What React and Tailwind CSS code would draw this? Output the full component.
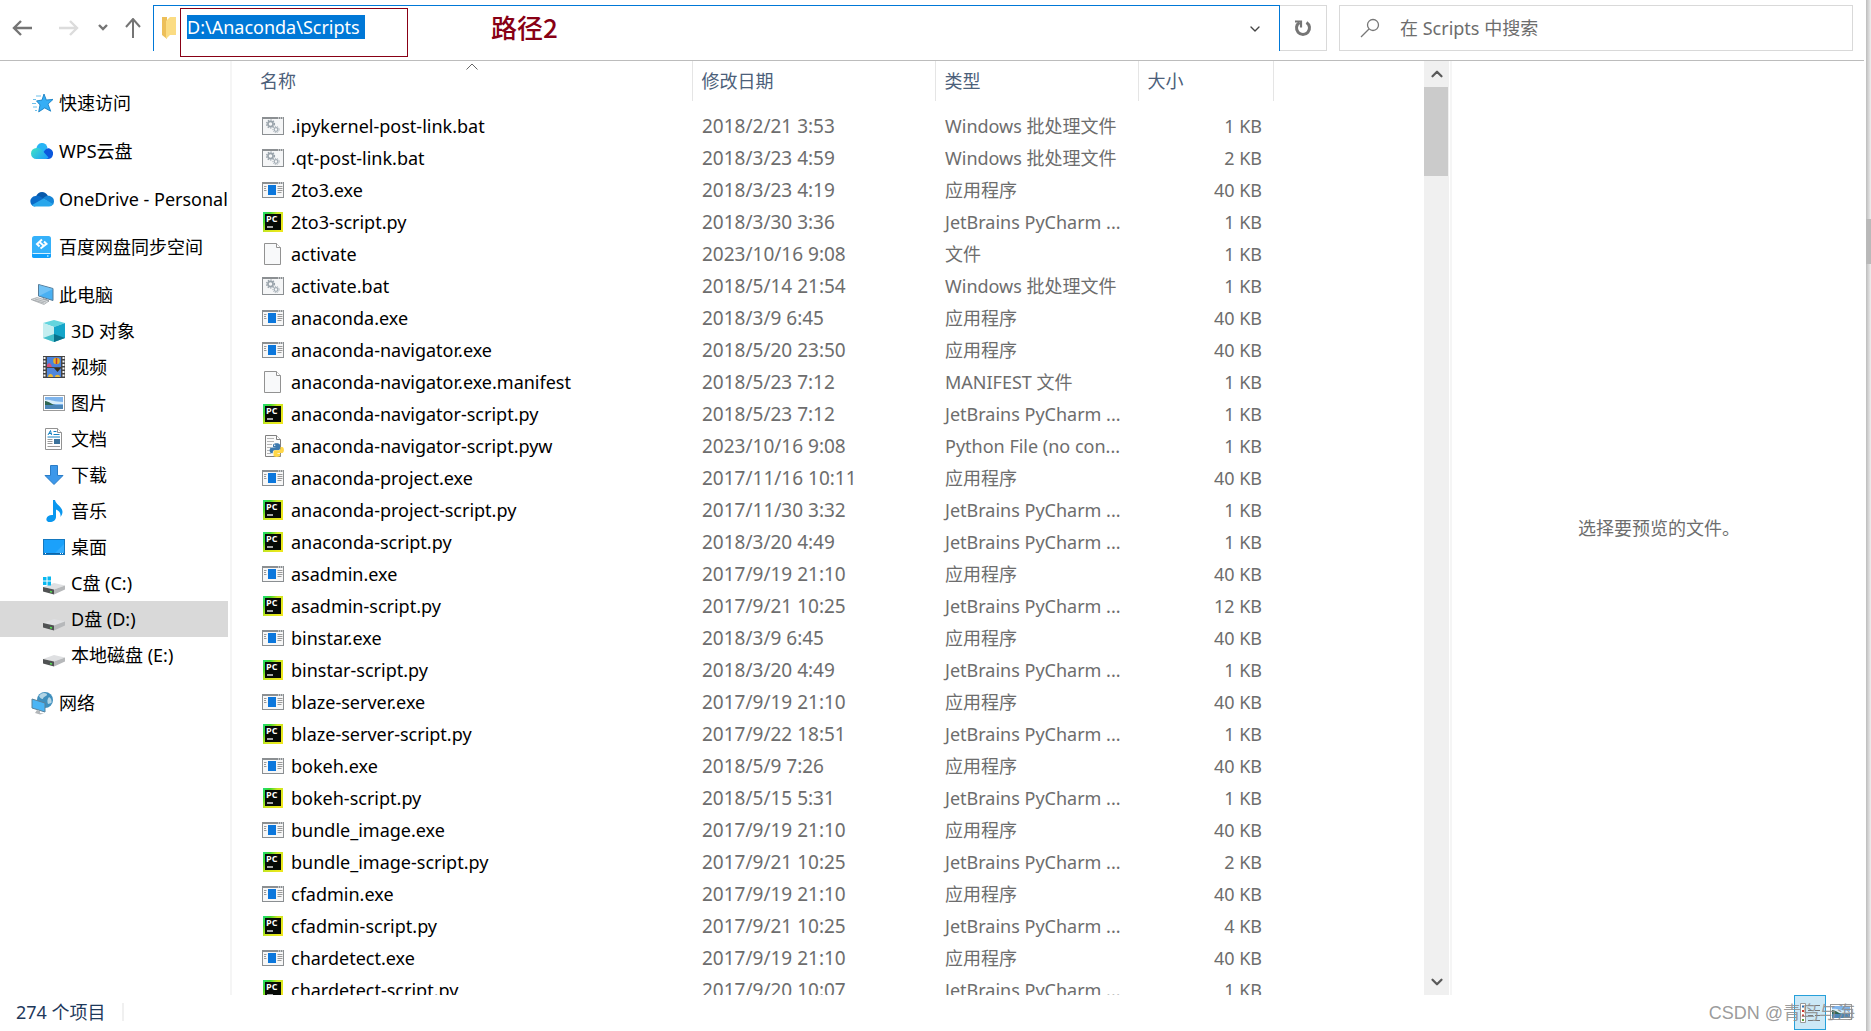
import { useId, useState } from 'react';
import { ChevronDown, ChevronUp } from 'lucide-react';

// ── Data ─────────────────────────────────────────────────────
const BAT = 'Windows 批处理文件';
const EXE = '应用程序';
const PY = 'JetBrains PyCharm ...';

const FILES = [
  ['bat', '.ipykernel-post-link.bat', '2018/2/21 3:53', BAT, '1 KB'],
  ['bat', '.qt-post-link.bat', '2018/3/23 4:59', BAT, '2 KB'],
  ['exe', '2to3.exe', '2018/3/23 4:19', EXE, '40 KB'],
  ['py', '2to3-script.py', '2018/3/30 3:36', PY, '1 KB'],
  ['file', 'activate', '2023/10/16 9:08', '文件', '1 KB'],
  ['bat', 'activate.bat', '2018/5/14 21:54', BAT, '1 KB'],
  ['exe', 'anaconda.exe', '2018/3/9 6:45', EXE, '40 KB'],
  ['exe', 'anaconda-navigator.exe', '2018/5/20 23:50', EXE, '40 KB'],
  ['file', 'anaconda-navigator.exe.manifest', '2018/5/23 7:12', 'MANIFEST 文件', '1 KB'],
  ['py', 'anaconda-navigator-script.py', '2018/5/23 7:12', PY, '1 KB'],
  ['pyw', 'anaconda-navigator-script.pyw', '2023/10/16 9:08', 'Python File (no con...', '1 KB'],
  ['exe', 'anaconda-project.exe', '2017/11/16 10:11', EXE, '40 KB'],
  ['py', 'anaconda-project-script.py', '2017/11/30 3:32', PY, '1 KB'],
  ['py', 'anaconda-script.py', '2018/3/20 4:49', PY, '1 KB'],
  ['exe', 'asadmin.exe', '2017/9/19 21:10', EXE, '40 KB'],
  ['py', 'asadmin-script.py', '2017/9/21 10:25', PY, '12 KB'],
  ['exe', 'binstar.exe', '2018/3/9 6:45', EXE, '40 KB'],
  ['py', 'binstar-script.py', '2018/3/20 4:49', PY, '1 KB'],
  ['exe', 'blaze-server.exe', '2017/9/19 21:10', EXE, '40 KB'],
  ['py', 'blaze-server-script.py', '2017/9/22 18:51', PY, '1 KB'],
  ['exe', 'bokeh.exe', '2018/5/9 7:26', EXE, '40 KB'],
  ['py', 'bokeh-script.py', '2018/5/15 5:31', PY, '1 KB'],
  ['exe', 'bundle_image.exe', '2017/9/19 21:10', EXE, '40 KB'],
  ['py', 'bundle_image-script.py', '2017/9/21 10:25', PY, '2 KB'],
  ['exe', 'cfadmin.exe', '2017/9/19 21:10', EXE, '40 KB'],
  ['py', 'cfadmin-script.py', '2017/9/21 10:25', PY, '4 KB'],
  ['exe', 'chardetect.exe', '2017/9/19 21:10', EXE, '40 KB'],
  ['py', 'chardetect-script.py', '2017/9/20 10:07', PY, '1 KB'],
];

const ROOTS = [
  { icon: 'star', label: '快速访问' },
  { icon: 'wps', label: 'WPS云盘' },
  { icon: 'onedrive', label: 'OneDrive - Personal' },
  { icon: 'baidu', label: '百度网盘同步空间' },
];

const THIS_PC = [
  { icon: 'cube', label: '3D 对象' },
  { icon: 'film', label: '视频' },
  { icon: 'picture', label: '图片' },
  { icon: 'doc', label: '文档' },
  { icon: 'download', label: '下载' },
  { icon: 'music', label: '音乐' },
  { icon: 'desktop', label: '桌面' },
  { icon: 'winDrive', label: 'C盘 (C:)' },
  { icon: 'drive', label: 'D盘 (D:)' },
  { icon: 'drive', label: '本地磁盘 (E:)' },
];

// ── File icons (22x22) ───────────────────────────────────────
function BatIcon() {
  return (
    <>
      <rect x="0.5" y="2.5" width="21" height="17" fill="#f5f6f7" stroke="#8b8f92" />
      <path d="M0 3h22" stroke="#8b8f92" strokeWidth="2" />
      <path d="M16 3h1M18 3h1M20 3h1" stroke="#fff" />
      <circle cx="8.5" cy="9" r="2.6" fill="none" stroke="#98a2aa" strokeWidth="1.6" />
      <circle cx="8.5" cy="9" r="4" fill="none" stroke="#98a2aa" strokeWidth="1.2" strokeDasharray="1.4 1.2" />
      <circle cx="14" cy="14.5" r="1.8" fill="none" stroke="#a3adb5" strokeWidth="1.2" />
      <circle cx="14" cy="14.5" r="3.1" fill="none" stroke="#a3adb5" strokeWidth="1" strokeDasharray="1.2 1" />
    </>
  );
}

function ExeIcon() {
  return (
    <>
      <rect x="0.5" y="3.5" width="21" height="15" fill="#f7f7f7" stroke="#8b8f92" />
      <path d="M0 4h22" stroke="#8b8f92" strokeWidth="2" />
      <path d="M16 4h1M18 4h1M20 4h1" stroke="#fff" />
      <rect x="6" y="6" width="8" height="10" fill="#0c77dc" />
      <path d="M2 7.5h2.500M2 9.500h2M2 11.500h2.500M15.500 7.500h5M15.500 9.500h5M15.500 11.500h5M15.500 13.500h4" stroke="#999" />
    </>
  );
}

function PyCharmIcon() {
  const id = useId();
  return (
    <>
      <defs>
        <linearGradient id={id} x1="0" y1="0" x2="1" y2="0.7">
          <stop offset="0" stopColor="#21e07c" />
          <stop offset="0.25" stopColor="#3fd62e" />
          <stop offset="0.5" stopColor="#c8e622" />
          <stop offset="1" stopColor="#eee81d" />
        </linearGradient>
      </defs>
      <rect x="1" y="1" width="20" height="20" fill={`url(#${id})`} />
      <rect x="3" y="3" width="16" height="16" fill="#060a06" />
      <text x="4" y="10.500" fontSize="9" fontWeight="700" fill="#fff" fontFamily="Open Sans, sans-serif">PC</text>
      <path d="M5 16h6" stroke="#fff" strokeWidth="1.300" />
    </>
  );
}

function BlankIcon() {
  return (
    <>
      <path d="M2.500 0.500h12l4 4v17h-16z" fill="#f8f9fa" stroke="#929292" />
      <path d="M14.500 0.500v4h4" fill="#fff" stroke="#929292" />
    </>
  );
}

function PywIcon() {
  return (
    <>
      <path d="M3.500 0.500h11l4 4v17h-15z" fill="#fafafa" stroke="#808080" />
      <path d="M14.500 0.500v4h4" fill="#fff" stroke="#808080" />
      <path d="M5 3.500h7M5 6.500h7M5 9.500h5M5 12.500h4M5 15.500h3M5 18.500h4" stroke="#b5b5b5" />
      <path d="M11 12v-2c0-2 7-2.500 7 0v3.500c0 1-.8 1.700-1.800 1.700h-3.400c-1.200 0-2 .8-2 2v1H9.500c-2.300 0-2.500-5.700 0-5.700h5z" fill="#3b78ad" />
      <path d="M18.500 12h1.700c2.300 0 2.300 6 0 6h-4.700v.7h2.800v1.600c0 2-6.800 2.200-6.800 0v-3.500c0-1 .7-1.600 1.600-1.600h3.600c1.200 0 1.800-.8 1.800-1.800z" fill="#ffd748" />
      <circle cx="12.700" cy="10.200" r="0.700" fill="#fff" />
    </>
  );
}

// ── Navigation icons (24x24) ─────────────────────────────────
function StarIcon() {
  return (
    <>
      <path d="M14 3l2.300 6 6.700-.6-5 4.700 2.700 7.100-6-3.300-6 4 1.300-7-3.500-4 5.500-.8z" fill="#35aef5" stroke="#1b81c4" strokeWidth="0.900" />
      <path d="M6 5h5M3 8.500h3M2 12.500h4M3 16h4M5 19.500h2" stroke="#6fc0ea" />
    </>
  );
}

function WpsIcon() {
  const id = useId();
  return (
    <>
      <defs>
        <linearGradient id={id} x1="0" y1="0" x2="1" y2="0.6">
          <stop offset="0" stopColor="#3fe3c4" />
          <stop offset="1" stopColor="#20a4f6" />
        </linearGradient>
      </defs>
      <path d="M6.500 10a5.500 5.500 0 0 1 11-1l-6 7z" fill="#28b4f5" />
      <path d="M8.500 20l5-7c2-3.500 4.500-4.500 6-3.500 2.500 1 4 3 3.500 6-.5 3-2.500 4.500-5 4.500z" fill="#0b58dd" />
      <path d="M6.500 9c3-.5 5 1.200 8 5l4 4.500c-1 1-2 1.500-4 1.500h-8A5.500 5.500 0 0 1 6.500 9z" fill={`url(#${id})`} />
    </>
  );
}

function OneDriveIcon() {
  return (
    <>
      <path d="M6 10c1.500-6 9-7 12-1l-6 5z" fill="#0759ab" />
      <path d="M5.500 9c3-.8 5 .7 8 2.500L5 19.500C-1.500 19-1 9.500 5.500 9z" fill="#0a6bc8" />
      <path d="M13 11.500c2-2.300 4.500-3.300 7-2.500 4 1.500 5 5 3 9z" fill="#1585d7" />
      <path d="M2 18l11.500-6.500L23 17c-.5 1.700-2 2.500-4 2.500H5.500c-1.500 0-3-.5-3.500-1.500z" fill="#29a7ec" />
    </>
  );
}

function BaiduIcon() {
  return (
    <>
      <rect x="2" y="1" width="19" height="22" rx="2.500" fill="#35b1fa" />
      <path d="M2 18h19v3c0 1-1 2-2 2H4c-1 0-2-1-2-2z" fill="#12a0fb" />
      <path d="M2.500 18.500h18" stroke="#d8f1ff" />
      <path d="M12 4.500L7 9l2.500 2.500M10.500 13.500L16.500 9 14 6.500M10 7.500l4 3.500" fill="none" stroke="#fff" strokeWidth="2" />
      <path d="M17 21h1.500" stroke="#b7e8ff" strokeWidth="1.500" />
    </>
  );
}

function ComputerIcon() {
  return (
    <>
      <path d="M8.500 1.500l14.500 4v12l-14.500-4.500z" fill="#49b0f2" stroke="#567b97" />
      <path d="M9 2l14 4-14 7z" fill="#83caf7" opacity="0.700" />
      <path d="M13 15l6 2v2l-7-1z" fill="#9aa0a4" />
      <path d="M1 16.500l6-2 12 3.500-5 3.500z" fill="#d9dcde" stroke="#9ca1a4" strokeWidth="0.700" />
      <path d="M3 17l11 3M5 16l11 3" stroke="#9ca1a4" strokeWidth="0.700" />
    </>
  );
}

function CubeIcon() {
  return (
    <>
      <path d="M1 4l11-3 11 3-11 4z" fill="#63d5de" />
      <path d="M1 4l11 4v15L1 19z" fill="#c4eef0" />
      <path d="M23 4L12 8v15l11-4z" fill="#14a5c9" />
      <path d="M1 19l11-4v8z" fill="#44bfcb" />
      <path d="M23 19l-11-4v8z" fill="#08718b" />
    </>
  );
}

function FilmIcon() {
  return (
    <>
      <rect x="1" y="1" width="22" height="22" fill="#444" />
      <path d="M2.500 2v21M21.500 2v21" stroke="#f4f4f4" strokeWidth="2" strokeDasharray="2 1.500" />
      <rect x="5" y="2" width="14" height="10" fill="#4b83db" />
      <rect x="5" y="13" width="14" height="9" fill="#4f86dc" />
      <path d="M5 10c2-3 4-2 5 2H5z" fill="#d8507a" />
      <circle cx="14.500" cy="6" r="3.300" fill="#e6b324" />
      <path d="M14.500 3v6" stroke="#c5362c" strokeWidth="1.500" />
      <path d="M12 13h7l-3.500 4z" fill="#38301c" />
      <path d="M13 22c0-3 5-3 5 0z" fill="#ebb935" />
      <path d="M6 22c0-4 5-4 5 0z" fill="#ebb935" />
    </>
  );
}

function PictureIcon() {
  return (
    <>
      <rect x="1.500" y="4.500" width="21" height="15" fill="#fff" stroke="#9b9b9b" />
      <rect x="3" y="6" width="18" height="12" fill="#7eb4ec" />
      <path d="M3 9c5-1 8 2 18 2v2H3z" fill="#d8edfa" />
      <path d="M3 10c4 0 7 4 11 4H3z" fill="#2f6652" />
      <path d="M3 14h18v4H3z" fill="#4c86b7" />
    </>
  );
}

function DocIcon() {
  return (
    <>
      <path d="M3.500 1.500h12l4 4v17h-16z" fill="#fff" stroke="#929292" />
      <path d="M15.500 1.500v4h4" fill="#fff" stroke="#929292" />
      <path d="M6 8l2.500-4.500L9.500 8M7 6.500h2.500M11.500 4.500h3M11.500 7.500h6M5.500 10h12.500" stroke="#1683c2" fill="none" strokeWidth="1" />
      <path d="M5.500 12.500h5M5.500 14.500h5M5.500 16.500h5M5.500 19.500h12.500" stroke="#9a9a9a" />
      <rect x="12" y="12" width="6" height="5" fill="#3c739c" />
    </>
  );
}

function DownloadIcon() {
  return <path d="M8.500 2.500h7v10h5.500L12 21.500l-9-9h5.500z" fill="#3d98ea" stroke="#2a7dc8" />;
}

function MusicIcon() {
  return (
    <path
      d="M11 1h2c1 5 7 6 7.500 12-.2 2-.8 3.500-2 5 .5-4-1.500-6.500-4.500-7.500V18c0 3-3 5-6 5s-4-1.500-3.500-3.500c.5-2.500 3.500-4 6.500-3.500z"
      fill="#0a97ef"
    />
  );
}

function DesktopIcon() {
  return (
    <>
      <rect x="1.500" y="4.500" width="21" height="15" fill="#1ba1fb" stroke="#1478bf" />
      <path d="M12 19L22 9v9H12z" fill="#44b4ff" opacity="0.600" />
      <path d="M2 18.500h20" stroke="#0d64a8" />
      <path d="M3 18.500h1M18 18.500h1M20 18.500h1" stroke="#fff" />
    </>
  );
}

function DriveIcon() {
  return (
    <>
      <path d="M1 16l11-4 11 2.500-11 4z" fill="#dfe0e2" />
      <path d="M1 16l11 2.500v5L1 20.500z" fill="#505253" />
      <path d="M12 18.500l11-4v4l-11 5z" fill="#b6b8ba" />
      <path d="M8 20.500l2 .5" stroke="#53e052" strokeWidth="1.500" />
    </>
  );
}

function WinDriveIcon() {
  return (
    <>
      <DriveIcon />
      <path d="M1 6h3.500v3.500H1zM5.500 5.500H9v4H5.500zM1 10.500h3.500V14H1zM5.500 10.500H9v4H5.500z" fill="#08b8f0" />
    </>
  );
}

function NetworkIcon() {
  return (
    <>
      <circle cx="15" cy="9" r="8" fill="#3f8fbd" />
      <path d="M9 5c3-4 6-3 8-2 0 3-4 2-4 5-2 0-3-1-4-3zM19 6c2 1 3 3 2.500 6L18 13c-1-2-1-5 1-7z" fill="#b3d5e5" />
      <path d="M2 8l13 4v9L2 17z" fill="#4bb5f5" stroke="#5a8199" />
      <path d="M7 19l3 1v2l4 .5-4 1-5-1.500z" fill="#b3b7ba" />
    </>
  );
}

const ICONS = {
  bat: BatIcon, exe: ExeIcon, py: PyCharmIcon, file: BlankIcon, pyw: PywIcon,
  star: StarIcon, wps: WpsIcon, onedrive: OneDriveIcon, baidu: BaiduIcon, pc: ComputerIcon,
  cube: CubeIcon, film: FilmIcon, picture: PictureIcon, doc: DocIcon, download: DownloadIcon,
  music: MusicIcon, desktop: DesktopIcon, drive: DriveIcon, winDrive: WinDriveIcon, network: NetworkIcon,
};

function Icon({ name, size = 24 }) {
  const Shape = ICONS[name];
  return (
    <svg width={size} height={size} viewBox={`0 0 ${size} ${size}`} className="shrink-0" aria-hidden="true">
      <Shape />
    </svg>
  );
}

// ── Top bar ──────────────────────────────────────────────────
function AddressBar() {
  return (
    <div className="flex h-[46px] flex-1 items-center border border-b-0 border-[#0078d7] pl-2">
      <svg width="20" height="24" viewBox="0 0 20 24" className="shrink-0" aria-hidden="true">
        <path d="M0 0h5v22l-5-4z" fill="#edbf59" />
        <path d="M4 4l4-4h6v18H8l-4 4z" fill="#fbdc83" />
      </svg>
      <label className="-ml-0.5 mt-0.5 flex h-[49px] w-[228px] shrink-0 items-start self-start border border-[#880015] pl-1.5 pt-1.5">
        <span className="sr-only">地址</span>
        <input
          className="h-6 w-[178px] bg-[#0078d7] text-[18px] leading-6 text-white outline-none"
          defaultValue="D:\Anaconda\Scripts"
        />
      </label>
      <span className="mb-1 ml-[83px] font-[KaiTi,'Noto_Sans_CJK_SC',cursive] text-[26px] font-medium text-[#880015]">路径2</span>
      <button type="button" aria-label="展开" className="ml-auto mr-4 text-[#444]">
        <ChevronDown size={16} strokeWidth={2} />
      </button>
    </div>
  );
}

function TopBar() {
  return (
    <header className="mr-0.5 flex h-[61px] items-start border-b border-[#bcbcbc] pt-[5px]">
      <nav className="flex h-[46px] w-[153px] shrink-0 items-center pl-3">
        <button type="button" aria-label="后退">
          <svg width="20" height="20" viewBox="0 0 20 20" fill="none" stroke="#757575" strokeWidth="2.400"><path d="M20 10H2M9 3L2 10l7 7" /></svg>
        </button>
        <button type="button" aria-label="前进" className="ml-[27px]">
          <svg width="20" height="20" viewBox="0 0 20 20" fill="none" stroke="#dcdcdc" strokeWidth="2.400"><path d="M0 10h18M11 3l7 7-7 7" /></svg>
        </button>
        <button type="button" aria-label="最近" className="ml-[19px]">
          <svg width="10" height="10" viewBox="0 0 10 10" fill="none" stroke="#757575" strokeWidth="2.400"><path d="M1 2l4 4 4-4" /></svg>
        </button>
        <button type="button" aria-label="向上" className="ml-[17px]">
          <svg width="16" height="20" viewBox="0 0 16 20" fill="none" stroke="#757575" strokeWidth="2"><path d="M8 20V2M1 9l7-8 7 8" /></svg>
        </button>
      </nav>
      <AddressBar />
      <button type="button" aria-label="刷新" className="flex h-[46px] w-[47px] items-center justify-center border border-l-0 border-[#d9d9d9]">
        <svg width="18" height="18" viewBox="0 0 18 18" fill="none" stroke="#757575" strokeWidth="3"><path d="M12.500 3.500a6.500 6.500 0 1 1-7 0" /><path d="M1 2.500h6v6" strokeWidth="2.200" /></svg>
      </button>
      <label className="ml-3 mr-[11px] flex h-[46px] w-[514px] items-center border border-[#d9d9d9] pl-5">
        <svg width="20" height="20" viewBox="0 0 20 20" fill="none" stroke="#777" strokeWidth="1.300"><circle cx="13" cy="7" r="5.500" /><path d="M9 11l-8 8" /></svg>
        <span className="sr-only">搜索</span>
        <input placeholder="在 Scripts 中搜索" className="ml-5 h-8 flex-1 text-[18px] outline-none placeholder:text-[#6d6d6d]" />
      </label>
    </header>
  );
}

// ── Navigation pane ──────────────────────────────────────────
function NavItem({ icon, label, child, selected, onClick }) {
  return (
    <button
      type="button"
      onClick={onClick}
      className={`flex h-9 w-full items-center gap-[5px] overflow-hidden whitespace-nowrap text-left ${child ? 'pl-[42px]' : 'pl-[30px]'} ${selected ? 'bg-[#d9d9d9]' : ''}`}
    >
      <Icon name={icon} />
      <span>{label}</span>
    </button>
  );
}

function Sidebar() {
  const [selected, setSelected] = useState('D盘 (D:)');
  return (
    <aside className="w-[232px] shrink-0 border-r-2 border-[#f5f5f5] pr-0.5 pt-6">
      <div className="flex flex-col gap-3">
        {ROOTS.map((item) => (
          <NavItem key={item.label} {...item} onClick={() => setSelected(item.label)} />
        ))}
        <div>
          <NavItem icon="pc" label="此电脑" onClick={() => setSelected('此电脑')} />
          {THIS_PC.map((item) => (
            <NavItem
              key={item.label}
              {...item}
              child
              selected={selected === item.label}
              onClick={() => setSelected(item.label)}
            />
          ))}
        </div>
        <NavItem icon="network" label="网络" onClick={() => setSelected('网络')} />
      </div>
    </aside>
  );
}

// ── File list ────────────────────────────────────────────────
function FileTable() {
  return (
    <div className="relative min-w-0 flex-1 overflow-hidden">
      <table className="w-[1041px] table-fixed border-collapse text-left">
        <colgroup>
          <col className="w-[460px]" />
          <col className="w-[243px]" />
          <col className="w-[203px]" />
          <col className="w-[135px]" />
        </colgroup>
        <thead className="text-[#4c607a]">
          <tr className="h-10">
            <th className="border-r border-[#e5e5e5] pl-7 font-normal">名称</th>
            <th className="border-r border-[#e5e5e5] pl-[9px] font-normal">修改日期</th>
            <th className="border-r border-[#e5e5e5] pl-[9px] font-normal">类型</th>
            <th className="border-r border-[#e5e5e5] pl-[9px] font-normal">大小</th>
          </tr>
        </thead>
        <tbody className="text-[#6d6d6d] before:block before:h-[9px] before:content-['']">
          {FILES.map(([icon, name, date, type, size]) => (
            <tr key={name} className="h-8">
              <td className="p-0 pl-[30px] text-black">
                <span className="flex items-center gap-[7px]">
                  <Icon name={icon} size={22} />
                  {name}
                </span>
              </td>
              <td className="p-0 pl-2.5 text-[19px]">{date}</td>
              <td className="whitespace-nowrap p-0 pl-2.5">{type}</td>
              <td className="p-0 pr-[11px] text-right">{size}</td>
            </tr>
          ))}
        </tbody>
      </table>
      <svg width="12" height="7" viewBox="0 0 12 7" className="absolute left-[234px] top-0.5" fill="none" stroke="#666"><path d="M0.500 6.500l5.500-5.500 5.500 5.500" /></svg>
    </div>
  );
}

function ScrollBar() {
  return (
    <div className="mr-px flex w-[25px] shrink-0 flex-col items-center bg-[#f0f0f0] text-[#5a5a5a]">
      <button type="button" aria-label="向上滚动" className="flex h-[26px] items-center">
        <ChevronUp size={18} strokeWidth={3} />
      </button>
      <div className="h-[89px] w-6 self-start bg-[#cbcbcb]" />
      <button type="button" aria-label="向下滚动" className="mt-auto flex h-[26px] items-center">
        <ChevronDown size={18} strokeWidth={3} />
      </button>
    </div>
  );
}

// ── Status bar ───────────────────────────────────────────────
function StatusBar() {
  return (
    <footer className="relative flex h-9 shrink-0 items-center pb-0.5 pl-4 text-[#1e395b]">
      <span>274 个项目</span>
      <span className="ml-4 h-[18px] w-0.5 bg-[#f0f0f0]" />
      <button type="button" aria-label="详细信息" className="ml-auto flex h-[35px] w-8 items-center justify-center self-start border border-[#26a0da] bg-[#cce8f6]">
        <svg width="22" height="22" viewBox="0 0 22 22" fill="none">
          <path d="M1.500 1.500h5v19h-5z" fill="#fff" stroke="#999" />
          <path d="M3 4.500h2" stroke="#2b6fb5" strokeWidth="2" />
          <path d="M3 9h2M3 13.500h2" stroke="#c8392c" strokeWidth="2" />
          <path d="M3 18h2" stroke="#5a9d38" strokeWidth="2" />
          <path d="M9 3.500h5M16 3.500h5M9 8.500h5M16 8.500h5M9 13.500h5M16 13.500h5M9 18.500h5M16 18.500h5" stroke="#777" />
        </svg>
      </button>
      <button type="button" aria-label="大图标" className="ml-[3px] mr-[13px]">
        <Icon name="picture" />
      </button>
      <span className="absolute right-[11px] top-1 font-['Liberation_Sans','Noto_Sans_CJK_SC',sans-serif] text-[18px] text-[#8f8f8f]/90">CSDN @青鸟与海</span>
    </footer>
  );
}

export default function App() {
  return (
    <div className="flex h-screen bg-white font-['Noto_Sans','Noto_Sans_CJK_SC',sans-serif] text-[18px] leading-7 text-black">
      <div className="flex min-w-0 flex-1 flex-col">
        <TopBar />
        <div className="flex min-h-0 flex-1">
          <Sidebar />
          <FileTable />
          <ScrollBar />
          <section className="flex w-[416px] shrink-0 items-center justify-center border-l-2 border-[#f5f5f5] text-[#6d6d6d]">
            选择要预览的文件。
          </section>
        </div>
        <StatusBar />
      </div>
      <div className="w-[5px] shrink-0 bg-gradient-to-r from-[#bdbdbd] to-[#eeeeee] pt-[219px]">
        <div className="h-[45px] bg-[#b9b9b9]" />
      </div>
    </div>
  );
}
